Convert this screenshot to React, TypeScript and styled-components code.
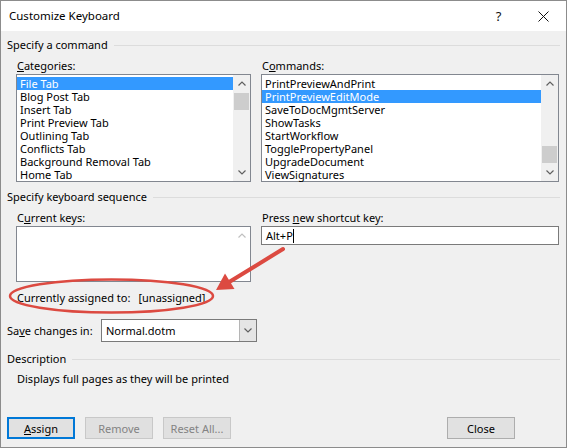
import React from "react";
import styled, { createGlobalStyle } from "styled-components";

const GlobalStyle = createGlobalStyle`
  html, body {
    margin: 0;
    padding: 0;
    background: #ffffff;
  }
  body {
    font-family: "Noto Sans", "Liberation Sans", sans-serif;
    font-size: 11px;
    color: #000;
  }
`;

const Window = styled.div`
  position: relative;
  width: 567px;
  height: 448px;
  box-sizing: border-box;
  border: 1px solid #8c8c8c;
  background: #f0f0f0;
  display: flex;
  flex-direction: column;
`;

const TitleBar = styled.div`
  height: 30px;
  background: #ffffff;
  display: flex;
  align-items: center;
  padding-left: 8px;
`;

const Title = styled.div`
  flex: 1;
  font-size: 11.5px;
  line-height: 14px;
`;

const TitleButton = styled.div`
  width: 45px;
  height: 30px;
  display: flex;
  align-items: center;
  justify-content: center;
  font-size: 13px;
  color: #111;
`;

const Body = styled.div`
  flex: 1;
  display: flex;
  flex-direction: column;
  padding: 0 6px 8px 6px;
`;

const GroupHeader = styled.div<{ $mt: number }>`
  display: flex;
  align-items: center;
  gap: 6px;
  line-height: 14px;
  margin-top: ${(p) => p.$mt}px;
  &::after {
    content: "";
    flex: 1;
    height: 1px;
    background: #dcdcdc;
  }
`;

const Columns = styled.div<{ $mt: number }>`
  display: grid;
  grid-template-columns: 235px 298px;
  column-gap: 10px;
  padding-left: 9px;
  margin-top: ${(p) => p.$mt}px;
  align-items: start;
`;

const Field = styled.div`
  display: flex;
  flex-direction: column;
`;

const Label = styled.div`
  line-height: 14px;
  padding-left: 1px;
  margin-bottom: 1px;
`;

const ListBox = styled.div<{ $h: number }>`
  height: ${(p) => p.$h}px;
  box-sizing: border-box;
  border: 1px solid #828790;
  background: #ffffff;
  display: flex;
`;

const Items = styled.div`
  flex: 1;
  padding-top: 2px;
`;

const Item = styled.div<{ $selected?: boolean }>`
  line-height: 13px;
  height: 13px;
  padding-left: 3px;
  white-space: nowrap;
  background: ${(p) => (p.$selected ? "#3399ff" : "transparent")};
  color: ${(p) => (p.$selected ? "#ffffff" : "#000")};
`;

const ScrollBar = styled.div<{ $bg: string }>`
  width: 17px;
  display: flex;
  flex-direction: column;
  background: ${(p) => p.$bg};
`;

const ScrollArrow = styled.div`
  height: 17px;
  display: flex;
  align-items: center;
  justify-content: center;
`;

const Track = styled.div`
  flex: 1;
  display: flex;
  flex-direction: column;
`;

const Thumb = styled.div<{ $top: number }>`
  margin: ${(p) => p.$top}px 1px 0 1px;
  height: 17px;
  background: #cdcdcd;
`;

const KeyInput = styled.div`
  height: 19px;
  box-sizing: border-box;
  border: 1px solid #7a7a7a;
  background: #ffffff;
  display: flex;
  align-items: center;
  padding-left: 4px;
  line-height: 14px;
`;

const Caret = styled.span`
  display: inline-block;
  width: 1px;
  height: 14px;
  background: #000;
`;

const AssignedRow = styled.div`
  display: flex;
  margin-top: 9px;
  padding-left: 10px;
  line-height: 14px;
  gap: 8px;
`;

const SaveRow = styled.div`
  display: flex;
  align-items: center;
  margin-top: 14px;
`;

const SaveLabel = styled.div`
  width: 94px;
  line-height: 14px;
`;

const Select = styled.div`
  width: 156px;
  height: 23px;
  box-sizing: border-box;
  border: 1px solid #7a7a7a;
  background: #ffffff;
  display: flex;
  align-items: stretch;
`;

const SelectValue = styled.div`
  flex: 1;
  display: flex;
  align-items: center;
  padding-left: 4px;
`;

const SelectButton = styled.div`
  width: 16px;
  background: #e5e5e5;
  border-left: 1px solid #b5b5b5;
  display: flex;
  align-items: center;
  justify-content: center;
`;

const DescText = styled.div`
  margin-top: 6px;
  padding-left: 10px;
  line-height: 14px;
`;

const ButtonRow = styled.div`
  margin-top: auto;
  display: flex;
  gap: 10px;
`;

const Button = styled.div<{ $disabled?: boolean; $default?: boolean; $push?: boolean }>`
  width: 68px;
  height: 22px;
  box-sizing: border-box;
  display: flex;
  align-items: center;
  justify-content: center;
  background: ${(p) => (p.$disabled ? "#e0e0e0" : "#e1e1e1")};
  border: ${(p) =>
    p.$default ? "2px solid #0078d7" : p.$disabled ? "1px solid #c8c8c8" : "1px solid #adadad"};
  color: ${(p) => (p.$disabled ? "#838383" : "#000")};
  margin-left: ${(p) => (p.$push ? "auto" : "0")};
  margin-right: ${(p) => (p.$push ? "45px" : "0")};
`;

const Annotation = styled.svg`
  position: absolute;
  left: -1px;
  top: -1px;
  pointer-events: none;
`;

const Chevron = ({ up, color = "#606060" }: { up?: boolean; color?: string }) => (
  <svg width="8" height="5" viewBox="0 0 8 5">
    <polyline
      points={up ? "0.5,4.5 4,1 7.5,4.5" : "0.5,0.5 4,4 7.5,0.5"}
      fill="none"
      stroke={color}
      strokeWidth="1.2"
    />
  </svg>
);

const categories = [
  "File Tab",
  "Blog Post Tab",
  "Insert Tab",
  "Print Preview Tab",
  "Outlining Tab",
  "Conflicts Tab",
  "Background Removal Tab",
  "Home Tab",
];

const commands = [
  "PrintPreviewAndPrint",
  "PrintPreviewEditMode",
  "SaveToDocMgmtServer",
  "ShowTasks",
  "StartWorkflow",
  "TogglePropertyPanel",
  "UpgradeDocument",
  "ViewSignatures",
];

export default function App() {
  return (
    <>
      <GlobalStyle />
      <Window>
        <TitleBar>
          <Title>Customize Keyboard</Title>
          <TitleButton>?</TitleButton>
          <TitleButton>
            <svg width="11" height="11" viewBox="0 0 11 11">
              <path d="M0.5 0.5 L10.5 10.5 M10.5 0.5 L0.5 10.5" stroke="#111" strokeWidth="1" />
            </svg>
          </TitleButton>
        </TitleBar>
        <Body>
          <GroupHeader $mt={7}>Specify a command</GroupHeader>
          <Columns $mt={7}>
            <Field>
              <Label>
                <u>C</u>ategories:
              </Label>
              <ListBox $h={108}>
                <Items>
                  {categories.map((c, i) => (
                    <Item key={c} $selected={i === 0}>
                      {c}
                    </Item>
                  ))}
                </Items>
                <ScrollBar $bg="#f0f0f0">
                  <ScrollArrow>
                    <Chevron up />
                  </ScrollArrow>
                  <Track>
                    <Thumb $top={1} />
                  </Track>
                  <ScrollArrow>
                    <Chevron />
                  </ScrollArrow>
                </ScrollBar>
              </ListBox>
            </Field>
            <Field>
              <Label>
                C<u>o</u>mmands:
              </Label>
              <ListBox $h={108}>
                <Items>
                  {commands.map((c, i) => (
                    <Item key={c} $selected={i === 1}>
                      {c}
                    </Item>
                  ))}
                </Items>
                <ScrollBar $bg="#f0f0f0">
                  <ScrollArrow>
                    <Chevron up />
                  </ScrollArrow>
                  <Track>
                    <Thumb $top={54} />
                  </Track>
                  <ScrollArrow>
                    <Chevron />
                  </ScrollArrow>
                </ScrollBar>
              </ListBox>
            </Field>
          </Columns>

          <GroupHeader $mt={8}>Specify keyboard sequence</GroupHeader>
          <Columns $mt={7}>
            <Field>
              <Label>
                C<u>u</u>rrent keys:
              </Label>
              <ListBox $h={56}>
                <Items />
                <ScrollBar $bg="#ffffff">
                  <ScrollArrow>
                    <Chevron up color="#c0c0c0" />
                  </ScrollArrow>
                </ScrollBar>
              </ListBox>
            </Field>
            <Field>
              <Label>
                Press <u>n</u>ew shortcut key:
              </Label>
              <KeyInput>
                Alt+P
                <Caret />
              </KeyInput>
            </Field>
          </Columns>

          <AssignedRow>
            <span>Currently assigned to:</span>
            <span>[unassigned]</span>
          </AssignedRow>

          <SaveRow>
            <SaveLabel>
              Sa<u>v</u>e changes in:
            </SaveLabel>
            <Select>
              <SelectValue>Normal.dotm</SelectValue>
              <SelectButton>
                <Chevron />
              </SelectButton>
            </Select>
          </SaveRow>

          <GroupHeader $mt={10}>Description</GroupHeader>
          <DescText>Displays full pages as they will be printed</DescText>

          <ButtonRow>
            <Button $default>
              <span>
                <u>A</u>ssign
              </span>
            </Button>
            <Button $disabled>Remove</Button>
            <Button $disabled>Reset All...</Button>
            <Button $push>Close</Button>
          </ButtonRow>
        </Body>

        <Annotation width="567" height="448" viewBox="0 0 567 448">
          <ellipse
            cx="111.5"
            cy="296"
            rx="101.5"
            ry="16.5"
            fill="none"
            stroke="#dc4a41"
            strokeWidth="2.5"
          />
          <line
            x1="283"
            y1="249"
            x2="230"
            y2="281.5"
            stroke="#dc4a41"
            strokeWidth="4"
            strokeLinecap="round"
          />
          <polygon points="216,290 234.5,289 225,273.5" fill="#dc4a41" />
        </Annotation>
      </Window>
    </>
  );
}
